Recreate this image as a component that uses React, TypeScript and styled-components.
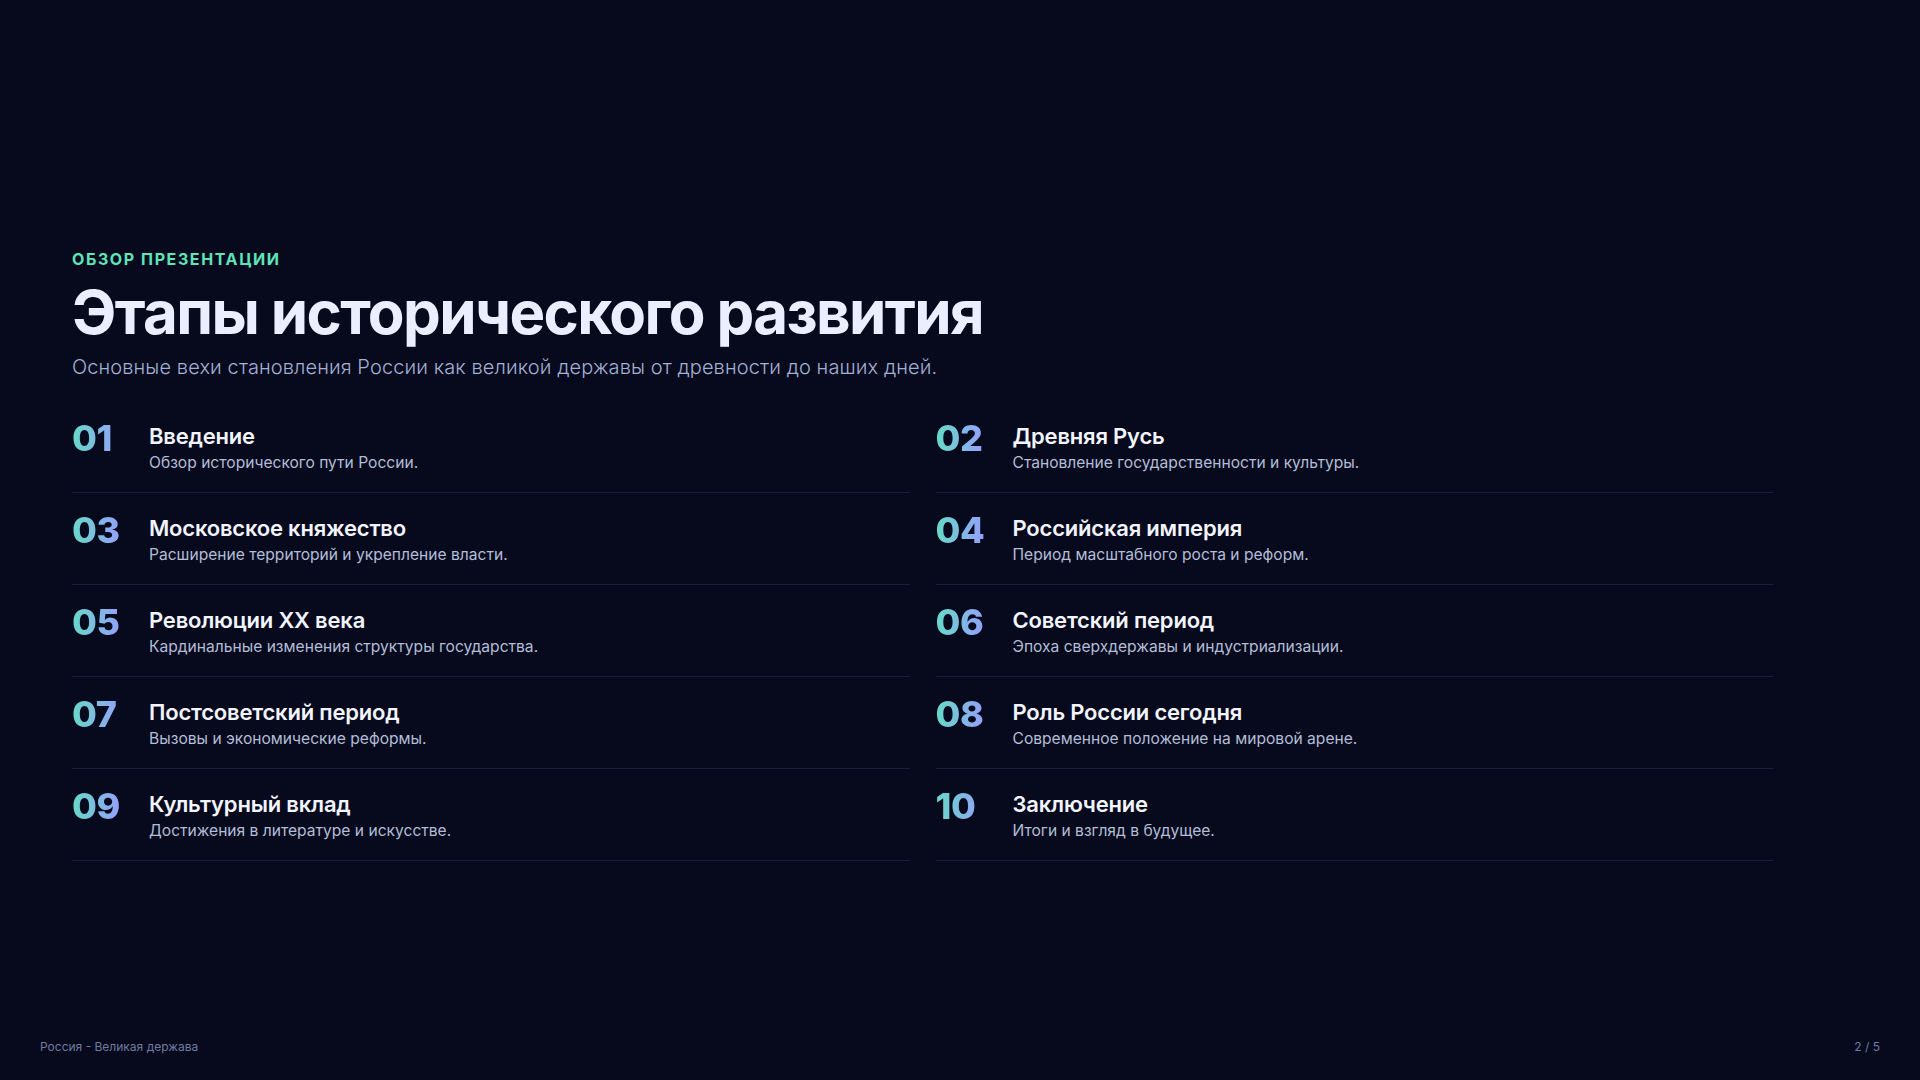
import React from "react";
import styled, { createGlobalStyle } from "styled-components";

const Global = createGlobalStyle`
  html, body { margin: 0; padding: 0; background: #060a1c; }
  body { font-family: Inter, "Noto Sans", sans-serif; }
`;

const Page = styled.div`
  width: 1920px; height: 1080px; display: flex; flex-direction: column;
  background: #060a1c; color: #e8edff; overflow: hidden;
`;
const Main = styled.main`
  flex: 1; display: flex; flex-direction: column; justify-content: center;
  padding: 70px 72px 0;
`;
const Eyebrow = styled.div`
  font-size: 16px; font-weight: 700; letter-spacing: 1.6px; color: #5fe3b8;
  text-transform: uppercase;
`;
const Title = styled.h1`
  margin: 10px 0 0; font-size: 60px; font-weight: 700; letter-spacing: -1.6px;
  line-height: 1.1; color: #eaeeff;
`;
const Subtitle = styled.p`
  margin: 10px 0 0; font-size: 20px; font-weight: 300; color: #a3b0d6;
  letter-spacing: 0.1px;
`;
const Grid = styled.div`
  margin-top: 22px; width: 1701px; display: grid;
  grid-template-columns: 1fr 1fr; column-gap: 26px;
`;
const Item = styled.div`
  display: flex; align-items: flex-start; padding: 17px 0 18px;
  border-bottom: 1px solid rgba(150,165,210,0.14);
`;
const Num = styled.div`
  width: 77px; flex: none; font-size: 36px; font-weight: 800; line-height: 1.15;
  background: linear-gradient(90deg, #67d9c7 0%, #8fa7f5 55%, #a98af5 100%);
  -webkit-background-clip: text; background-clip: text; color: transparent;
  letter-spacing: -0.5px;
`;
const Texts = styled.div`display: flex; flex-direction: column; padding-top: 4px;`;
const ItemTitle = styled.div`
  font-size: 22px; font-weight: 600; color: #f2f4ff; line-height: 28px; letter-spacing: -0.2px;
`;
const ItemDesc = styled.div`
  margin-top: 2px; font-size: 15.6px; color: #b3bdd8; line-height: 22px;
`;
const Footer = styled.footer`
  display: flex; justify-content: space-between; padding: 0 40px 26px;
  font-size: 12px; color: #6f7aa0;
`;

const items = [
  ["01", "Введение", "Обзор исторического пути России."],
  ["02", "Древняя Русь", "Становление государственности и культуры."],
  ["03", "Московское княжество", "Расширение территорий и укрепление власти."],
  ["04", "Российская империя", "Период масштабного роста и реформ."],
  ["05", "Революции XX века", "Кардинальные изменения структуры государства."],
  ["06", "Советский период", "Эпоха сверхдержавы и индустриализации."],
  ["07", "Постсоветский период", "Вызовы и экономические реформы."],
  ["08", "Роль России сегодня", "Современное положение на мировой арене."],
  ["09", "Культурный вклад", "Достижения в литературе и искусстве."],
  ["10", "Заключение", "Итоги и взгляд в будущее."],
];

export default function App() {
  return (
    <Page>
      <Global />
      <Main>
        <Eyebrow>Обзор презентации</Eyebrow>
        <Title>Этапы исторического развития</Title>
        <Subtitle>Основные вехи становления России как великой державы от древности до наших дней.</Subtitle>
        <Grid>
          {items.map(([n, t, d]) => (
            <Item key={n}>
              <Num>{n}</Num>
              <Texts>
                <ItemTitle>{t}</ItemTitle>
                <ItemDesc>{d}</ItemDesc>
              </Texts>
            </Item>
          ))}
        </Grid>
      </Main>
      <Footer>
        <span>Россия - Великая держава</span>
        <span>2 / 5</span>
      </Footer>
    </Page>
  );
}
